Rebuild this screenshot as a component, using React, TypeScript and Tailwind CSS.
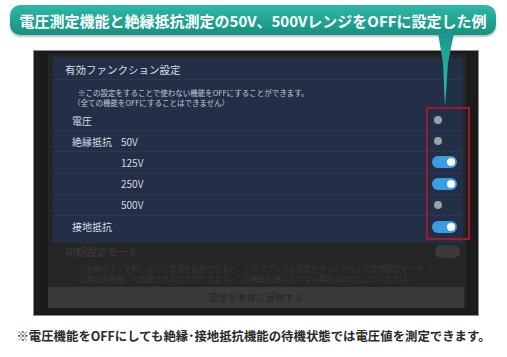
import React from 'react';

const rows = [
  { label: '電圧', sub: '', on: false },
  { label: '絶縁抵抗', sub: '50V', on: false },
  { label: '', sub: '125V', on: true },
  { label: '', sub: '250V', on: true },
  { label: '', sub: '500V', on: false },
  { label: '接地抵抗', sub: '', on: true }
];

const Toggle = ({ on }: { on: boolean }) => (
  <div
    className={`flex h-[12px] w-[25px] items-center rounded-full px-[2px] ${
      on ? 'justify-end bg-[#3d9be2]' : 'justify-start'
    }`}>
    <div className={`h-[8px] w-[8px] rounded-full ${on ? 'bg-white' : 'bg-[#9aa0a8]'}`} />
  </div>
);

const App = () => {
  return (
    <div
      className="relative flex h-[357px] w-[507px] flex-col overflow-hidden bg-white"
      style={{ fontFamily: '"Noto Sans CJK JP", "Noto Sans", sans-serif' }}>
      {/* callout */}
      <div className="mx-[10px] mt-[5px] flex h-[30px] w-[486px] items-center justify-center rounded-[10px] bg-linear-to-b from-[#2fb8a6] to-[#15917f] shadow-[0_2px_2px_rgba(0,0,0,0.25)]">
        <span className="text-[15px] leading-none font-bold whitespace-nowrap text-white">
          電圧測定機能と絶縁抵抗測定の50V、500VレンジをOFFに設定した例
        </span>
      </div>

      {/* device frame */}
      <div className="mt-[15px] ml-[33px] flex h-[266px] w-[446px] flex-col border border-[#8c8c8c] bg-[#1b1b1b] pt-[3px] pr-[12px] pb-[7px] pl-[14px]">
        <div className="flex flex-1 flex-col bg-[#262626]">
          {/* function settings panel */}
          <div className="mt-[4px] mr-[3px] ml-[5px] flex flex-col bg-[#232f47] pb-[6px]">
            <div className="border-b border-[#2b3852] pt-[5px] pb-[2px] pl-[12px] text-[10.5px] leading-[14px] text-[#d9dde4]">
              有効ファンクション設定
            </div>
            <div className="mt-[8px] flex flex-col text-[7.5px] leading-[10px] text-[#c4c9d2]">
              <span className="pl-[25px]">※この設定をすることで使わない機能をOFFにすることができます。</span>
              <span className="pl-[20px]">（全ての機能をOFFにすることはできません）</span>
            </div>
            <div className="mt-[2px] flex flex-col">
              {rows.map((row, index) => (
                <div
                  key={`row-${index}`}
                  className={`flex h-[21.2px] items-center pr-[6px] pl-[19px] text-[10px] text-[#d5d9e0] ${
                    index === rows.length - 1 ? '' : 'border-b border-[#2b3852]'
                  }`}>
                  <span className="w-[49px]">{row.label}</span>
                  <span className="flex-1">{row.sub}</span>
                  <Toggle on={row.on} />
                </div>
              ))}
            </div>
          </div>

          {/* initial setting mode (dimmed) */}
          <div className="mr-[6px] ml-[17px] flex h-[17px] items-center">
            <span className="flex-1 text-[10.5px] text-[#3b3b3b]">初期設定モード</span>
            <div className="h-[13px] w-[25px] rounded-full bg-[#3a3a3a]" />
          </div>
          <div className="mt-[4px] flex flex-col pl-[31px] text-[7.5px] leading-[10px] whitespace-nowrap text-[#383838]">
            <span>※初期ボタンを押しながら電源を起動させると、このアプリでの設定をキャンセルして初期設定モード（</span>
            <span>工場出荷状態）で起動させることができます。この機能を使いたくない場合はOFFにしてください。</span>
          </div>
          <div className="mt-auto mr-[2px] flex h-[21px] items-center justify-center bg-[#3a3a3a] text-[9.5px] text-[#262626]">
            設定を本体に反映する
          </div>
        </div>
      </div>

      {/* footnote */}
      <div className="mt-[14px] text-center text-[12.4px] leading-none font-bold whitespace-nowrap text-[#2a2a2a]">
        ※電圧機能をOFFにしても絶縁･接地抵抗機能の待機状態では電圧値を測定できます。
      </div>

      {/* callout pointer */}
      <svg className="absolute top-[33px] left-[436px]" width="20" height="76" viewBox="0 0 20 76">
        <defs>
          <linearGradient id="ptr" x1="0" y1="0" x2="0" y2="1">
            <stop offset="0%" stopColor="#18988a" />
            <stop offset="100%" stopColor="#2ec4b0" />
          </linearGradient>
        </defs>
        <polygon points="2,0 18,0 12,30 9,74 7,30" fill="url(#ptr)" />
      </svg>

      {/* highlight box */}
      <div className="pointer-events-none absolute top-[107px] left-[426px] h-[133px] w-[44px] border-2 border-[#9e1a2d]" />
    </div>
  );
};

export default App;
